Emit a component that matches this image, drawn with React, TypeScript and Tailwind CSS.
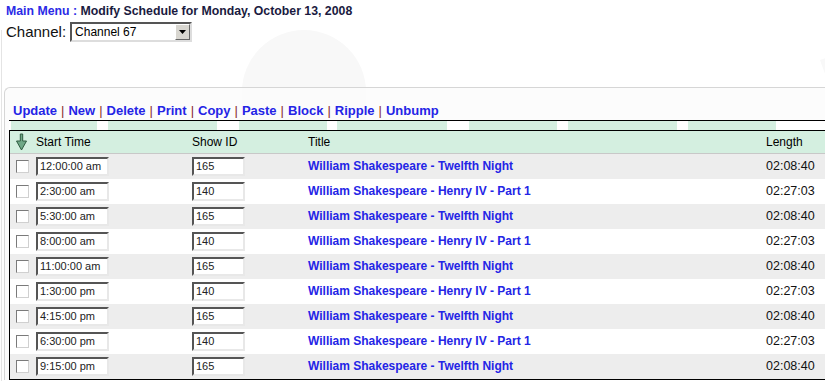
import React from "react";

const rows = [
  { t: "12:00:00 am", id: "165", title: "William Shakespeare - Twelfth Night", len: "02:08:40" },
  { t: "2:30:00 am", id: "140", title: "William Shakespeare - Henry IV - Part 1", len: "02:27:03" },
  { t: "5:30:00 am", id: "165", title: "William Shakespeare - Twelfth Night", len: "02:08:40" },
  { t: "8:00:00 am", id: "140", title: "William Shakespeare - Henry IV - Part 1", len: "02:27:03" },
  { t: "11:00:00 am", id: "165", title: "William Shakespeare - Twelfth Night", len: "02:08:40" },
  { t: "1:30:00 pm", id: "140", title: "William Shakespeare - Henry IV - Part 1", len: "02:27:03" },
  { t: "4:15:00 pm", id: "165", title: "William Shakespeare - Twelfth Night", len: "02:08:40" },
  { t: "6:30:00 pm", id: "140", title: "William Shakespeare - Henry IV - Part 1", len: "02:27:03" },
  { t: "9:15:00 pm", id: "165", title: "William Shakespeare - Twelfth Night", len: "02:08:40" },
];

const menu = ["Update", "New", "Delete", "Print", "Copy", "Paste", "Block", "Ripple", "Unbump"];

const strip: [number, number][] = [
  [11, 97],
  [108, 217],
  [239, 327],
  [337, 447],
  [469, 557],
  [568, 677],
  [688, 776],
];

function Arrow() {
  return (
    <svg width="11" height="18" viewBox="0 0 11 18">
      <path d="M4.3 1 H6.7 V8 H10.5 L5.5 17 L0.5 8 H4.3 Z" fill="#6fa887" stroke="#2f5a40" strokeWidth="1" />
    </svg>
  );
}

function TextBox({ value, w }: { value: string; w: string }) {
  return (
    <div
      className={`${w} h-[19px] bg-white border-2 border-t-[#555] border-l-[#555] border-r-[#e8e8e8] border-b-[#e8e8e8] flex items-center pl-[2px] text-[11px] text-[#222] leading-none`}
    >
      {value}
    </div>
  );
}

export default function App() {
  return (
    <div
      className="relative w-[825px] h-[381px] overflow-hidden bg-white text-black"
      style={{ fontFamily: '"Liberation Sans", Arial, sans-serif' }}
    >
      {/* watermark */}
      <div className="absolute left-[242px] top-[30px] w-[124px] h-[200px] rounded-full bg-[#f8f8f8]" />
      <div className="absolute left-[820px] top-[60px] w-[300px] h-[300px] rotate-[-20deg] bg-[#f8f8f8] origin-top-left" />
      <div className="absolute left-[1px] top-[30px] bottom-0 border-l border-[#e4e4e4]" />

      <div className="relative">
        <div className="pl-[6px] pt-[3px] text-[12.3px] font-bold leading-[16px] text-[#1a1a40]">
          <span className="text-[#2b2be6]">Main Menu</span>
          <span className="text-[#2b2be6]"> : </span>
          Modify Schedule for Monday, October 13, 2008
        </div>
        <div className="flex items-center pl-[6px] mt-[2px] h-[22px]">
          <span className="text-[15px] text-[#111] mr-[4px]">Channel:</span>
          <div className="w-[122px] h-[20px] border-2 border-t-[#555] border-l-[#555] border-r-[#ddd] border-b-[#ddd] bg-white flex items-center">
            <span className="flex-1 pl-[3px] text-[12px] leading-none">Channel 67</span>
            <div className="w-[15px] h-[16px] bg-[#d8d6d0] border border-t-white border-l-white border-r-[#666] border-b-[#666] flex items-center justify-center">
              <svg width="7" height="4" viewBox="0 0 7 4">
                <path d="M0 0 H7 L3.5 4 Z" fill="#000" />
              </svg>
            </div>
          </div>
        </div>

        <div className="ml-[4px] mt-[44px] border-l border-t border-[#d6d6d6] rounded-tl-[6px] bg-[#fbfbfb]/80">
          <div className="pl-[8px] pt-[12px] h-[32px] flex items-center text-[13px] font-bold leading-none">
            {menu.map((m, i) => (
              <React.Fragment key={m}>
                {i > 0 && <span className="text-[#8a2a2a] font-normal mx-[4px]">|</span>}
                <span className="text-[#2424e6]">{m}</span>
              </React.Fragment>
            ))}
          </div>
          <div className="ml-[4px] border-t border-black">
            <div className="relative h-[9px] bg-white">
              {strip.map(([a, b]) => (
                <div
                  key={a}
                  className="absolute top-0 h-[9px] bg-[#d4efe0]"
                  style={{ left: a - 9, width: b - a }}
                />
              ))}
            </div>
            <div className="border-l border-t border-black">
              <div className="flex items-center h-[23px] bg-[#d4efe0] border-b border-[#c8c8c8] text-[12px]">
                <div className="w-[25px] pl-[6px] flex items-center">
                  <Arrow />
                </div>
                <div className="w-[156px] pl-[1px]">Start Time</div>
                <div className="w-[116px] pl-[1px]">Show ID</div>
                <div className="w-[458px] pl-[1px]">Title</div>
                <div className="pl-[1px]">Length</div>
              </div>
              {rows.map((r, i) => (
                <div
                  key={i}
                  className={`flex items-center h-[25px] text-[12px] leading-[14px] ${i % 2 === 0 ? "bg-[#ededed]" : "bg-white"}`}
                >
                  <div className="w-[25px] pl-[6px] flex items-center">
                    <div className="w-[13px] h-[13px] bg-white border border-t-[#7a7a7a] border-l-[#7a7a7a] border-r-[#d0d0d0] border-b-[#d0d0d0]" />
                  </div>
                  <div className="w-[156px] pl-[1px]">
                    <TextBox value={r.t} w="w-[73px]" />
                  </div>
                  <div className="w-[116px] pl-[1px]">
                    <TextBox value={r.id} w="w-[53px]" />
                  </div>
                  <div className="w-[458px] pl-[1px] pb-[1px] font-bold text-[#2424e6]">{r.title}</div>
                  <div className="pl-[1px] pb-[1px] text-[12.5px] text-[#111]">{r.len}</div>
                </div>
              ))}
              <div className="h-[1px] bg-black" />
            </div>
          </div>
        </div>
      </div>
    </div>
  );
}
